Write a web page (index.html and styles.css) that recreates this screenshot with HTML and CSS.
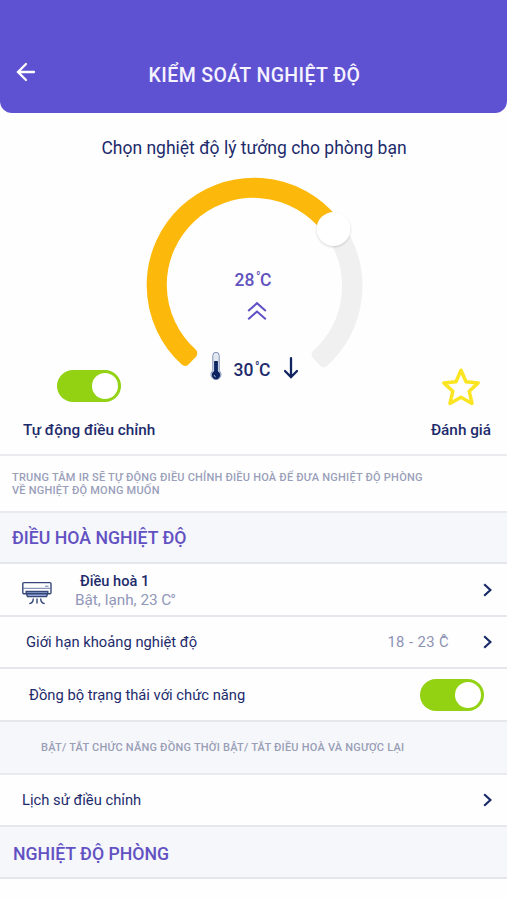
FILE: index.html
```html
<!DOCTYPE html>
<html lang="vi">
<head>
<meta charset="utf-8">
<meta name="viewport" content="width=device-width, initial-scale=1">
<title>Kiểm soát nghiệt độ</title>
<link rel="stylesheet" href="styles.css">
</head>
<body>
<header class="header">
  <svg class="back" width="20" height="20" viewBox="0 0 20 20"><path d="M18 10H2M10 2L2 10L10 18"/></svg>
  <h1 class="title">KIỂM SOÁT NGHIỆT ĐỘ</h1>
</header>
<main>
  <section class="control">
    <p class="intro">Chọn nghiệt độ lý tưởng cho phòng bạn</p>
    <div class="gauge">
      <svg class="dial" width="507" height="215" viewBox="-0.5 167.5 507 215">
        <path class="track" d="M323.1 361.7A102.5 102.5 0 0 0 337.8 225.8L329.3 232A92 92 0 0 1 316 353.9Z"/>
        <path class="level" d="M184.6 360.4A102.5 102.5 0 1 1 334 221L326 228A92 92 0 1 0 191.8 352.8Z"/>
        <circle class="knob" cx="333" cy="228.6" r="17"/>
      </svg>
      <div class="readings">
        <div class="target">28<span class="unit"><i class="deg">°</i>C</span></div>
        <svg class="up" width="20" height="20" viewBox="0 0 20 20"><path d="M1.2 10L10 2.2L18.8 10M1.2 18.3L10 10.5L18.8 18.3"/></svg>
        <div class="current">
          <svg width="14" height="30" viewBox="0 0 14 30">
            <path class="glass" d="M3.8 4.5a3.2 3.2 0 0 1 6.4 0v15.2a5 5 0 1 1-6.4 0Z"/>
            <path class="mercury" d="M7 10v14"/><circle class="bulb" cx="7" cy="24" r="4.2"/>
            <path class="shine" d="M5.2 24.2a1.8 1.8 0 0 0 1.4 1.6"/>
          </svg>
          <span class="value">30<span class="unit"><i class="deg">°</i>C</span></span>
          <svg class="down" width="14" height="22" viewBox="0 0 14 22"><path d="M7 1.2V20M1 14L7 20L13 14"/></svg>
        </div>
      </div>
    </div>
    <div class="actions">
      <div class="action auto"><span class="switch"></span><span class="label">Tự động điều chỉnh</span></div>
      <div class="action rate">
        <svg class="star" width="40" height="40" viewBox="0 0 40 40"><path d="M20 3.2L25 14.7L37.2 15.9L28.2 24.2L31 36.4L20 30.2L9 36.4L11.8 24.2L2.8 15.9L15 14.7Z"/></svg>
        <span class="label">Đánh giá</span>
      </div>
    </div>
  </section>
  <p class="note">TRUNG TÂM IR SẼ TỰ ĐỘNG ĐIỀU CHỈNH ĐIỀU HOÀ ĐỂ ĐƯA NGHIỆT ĐỘ PHÒNG<br>VỀ NGHIỆT ĐỘ MONG MUỐN</p>
  <h2 class="section">ĐIỀU HOÀ NGHIỆT ĐỘ</h2>
  <div class="row device">
    <svg class="ac" width="30" height="24" viewBox="0 0 30 24">
      <path class="vent" d="M4 10.5h22l-1.5 5h-19Z"/>
      <rect class="line" x=".8" y="1.6" width="28.2" height="11.2" rx="1.2"/>
      <path class="line" d="M4.2 12.8V10.5H25.8V12.8M4.5 13L5.5 15.6H24.5L25.5 13"/>
      <path class="thin" d="M1 7.3H29M23 5.2h3.5"/>
      <path class="line" d="M11.3 17.5q0 4.4-4 5.1M15 17.5v5.1M18.7 17.5q0 4.4 4 5.1"/>
    </svg>
    <div class="device-text"><div class="name">Điều hoà 1</div><div class="status">Bật, lạnh, 23 C<i class="after">°</i></div></div>
    <svg class="chevron" width="9" height="14" viewBox="0 0 9 14"><path d="M1.2 1.2L7.4 7L1.2 12.8"/></svg>
  </div>
  <div class="row range">
    <span class="text limit">Giới hạn khoảng nghiệt độ</span><span class="limits">18 - 23 <span class="cdeg">C<i>°</i></span></span>
    <svg class="chevron" width="9" height="14" viewBox="0 0 9 14"><path d="M1.2 1.2L7.4 7L1.2 12.8"/></svg>
  </div>
  <div class="row sync"><span class="text sync-text">Đồng bộ trạng thái với chức năng</span><span class="switch"></span></div>
  <p class="hint">BẬT/ TẮT CHỨC NĂNG ĐỒNG THỜI BẬT/ TẮT ĐIỀU HOÀ VÀ NGƯỢC LẠI</p>
  <div class="row history"><span class="text history-text">Lịch sử điều chỉnh</span>
    <svg class="chevron" width="9" height="14" viewBox="0 0 9 14"><path d="M1.2 1.2L7.4 7L1.2 12.8"/></svg>
  </div>
  <h2 class="section room">NGHIỆT ĐỘ PHÒNG</h2>
</main>
</body>
</html>
```
FILE: styles.css
```css
* { box-sizing: border-box; margin: 0; padding: 0; }
body { background: #fefefe; color: #1d2b6b; font-family: Roboto, "Noto Sans", sans-serif; height: 900px; overflow: hidden; }
svg { display: block; fill: none; flex: none; }
i { font-style: normal; }

.header { height: 113px; background: #5f52d2; border-radius: 0 0 12px 12px; display: grid; grid-template-columns: 53px 1fr 51px; padding-top: 61px; }
.back { margin: 1px 0 0 16px; stroke: #fff; stroke-width: 2.3; stroke-linecap: round; }
.title { color: #f5f3ff; font-size: 19.5px; line-height: 30px; font-weight: 500; text-align: center; letter-spacing: .4px; white-space: nowrap; }

.control { height: 343px; border-bottom: 2px solid #ececf0; }
.intro { height: 55px; padding: 23px 0 0 1px; font-size: 17.5px; line-height: 24px; text-align: center; white-space: nowrap; }
.gauge { display: grid; height: 215px; }
.gauge > * { grid-area: 1 / 1; }
.track { fill: #f0f0f0; stroke: #f0f0f0; stroke-width: 10; stroke-linejoin: round; }
.level { fill: #fdb90b; stroke: #fdb90b; stroke-width: 10; stroke-linejoin: round; }
.knob { fill: #fff; filter: drop-shadow(0 1px 1px rgba(0, 0, 0, .16)); }
.readings { display: flex; flex-direction: column; align-items: center; padding-top: 100px; }
.target, .value { display: flex; font-size: 17.5px; font-weight: 500; line-height: 24px; letter-spacing: .3px; white-space: nowrap; }
.unit { display: flex; margin-left: 1px; }
.deg { font-size: 12px; line-height: 19px; width: 4px; }
.target { color: #6152bd; }
.up { margin: 9px 0 0 6px; stroke: #5f50c3; stroke-width: 2; }
.current { display: flex; align-items: center; margin-top: 28px; }
.value { margin: 9px 0 0 10px; }
.down { margin: 4px 0 0 13px; stroke: #10245f; stroke-width: 2.3; stroke-linecap: round; }
.target { margin-right: 1px; }
.glass { fill: #e3e8f0; stroke: #8090b5; stroke-width: 1; }
.mercury { stroke: #0d2462; stroke-width: 3.8; }
.bulb { fill: #0d2462; }
.shine { stroke: #fff; stroke-width: .8; }

.actions { display: flex; justify-content: space-between; margin-top: -17px; padding: 0 16px 0 23px; }
.action { display: flex; flex-direction: column; align-items: center; }
.label { font-size: 15.3px; line-height: 22px; font-weight: 500; white-space: nowrap; }
.switch { display: block; flex: none; width: 64px; height: 32px; border-radius: 16px; background: #92d213; padding: 3px; }
.switch::after { content: ""; display: block; width: 26px; height: 26px; border-radius: 50%; background: #fff; margin-left: auto; }
.auto .switch { margin-top: 4px; }
.auto .label { margin-top: 17px; }
.star { stroke: #fbe522; stroke-width: 3.5; stroke-linejoin: round; margin-top: 1px; }
.rate .label { margin-top: 12px; }

.note { height: 55px; padding: 15px 12px 0; font-size: 11px; line-height: 13px; font-weight: 500; letter-spacing: .22px; color: #9a9fba; white-space: nowrap; }
.section { height: 53px; padding-left: 12px; background: #f6f7fb; border-top: 2px solid #e9eaf0; border-bottom: 2px solid #e5e6ec; color: #6251c2; font-size: 17.7px; line-height: 50px; font-weight: 500; white-space: nowrap; }
.row { display: flex; align-items: center; padding-right: 15px; border-bottom: 2px solid #e6e7ec; white-space: nowrap; }
.chevron { margin-left: auto; stroke: #192a69; stroke-width: 2.2; }
.device { height: 53px; }
.ac { margin: 6px 0 0 22px; }
.line { stroke: #344778; stroke-width: 1.4; }
.thin { stroke: #5f70a0; stroke-width: .9; }
.vent { fill: #91a5d5; }
.device-text { margin-left: 22px; padding-top: 2px; }
.name { padding-left: 6px; font-size: 14.6px; line-height: 19px; font-weight: 500; }
.status { padding-left: 1px; font-size: 15.3px; line-height: 19px; color: #9197b9; }
.after { margin-left: -1px; }
.range { height: 52px; }
.text { font-size: 14.75px; line-height: 22px; }
.limit { margin-left: 26px; }
.limits { margin-left: auto; font-size: 14.8px; color: #8c92b2; letter-spacing: .4px; }
.range .chevron { margin-left: 34px; }
.cdeg { display: inline-grid; }
.cdeg > i { height: 0; margin-top: -20px; text-align: center; }
.sync { height: 53px; padding-right: 23px; }
.sync-text { margin-left: 29px; }
.sync .switch { margin-left: auto; }
.hint { height: 53px; padding-left: 41px; background: #f6f7fb; border-bottom: 2px solid #e9eaf0; font-size: 11px; line-height: 52px; font-weight: 500; letter-spacing: .22px; color: #999eb6; white-space: nowrap; }
.history { height: 52px; }
.history-text { margin-left: 22px; }
.room { height: 52px; padding-left: 13px; border-top: 0; line-height: 54px; }
```
